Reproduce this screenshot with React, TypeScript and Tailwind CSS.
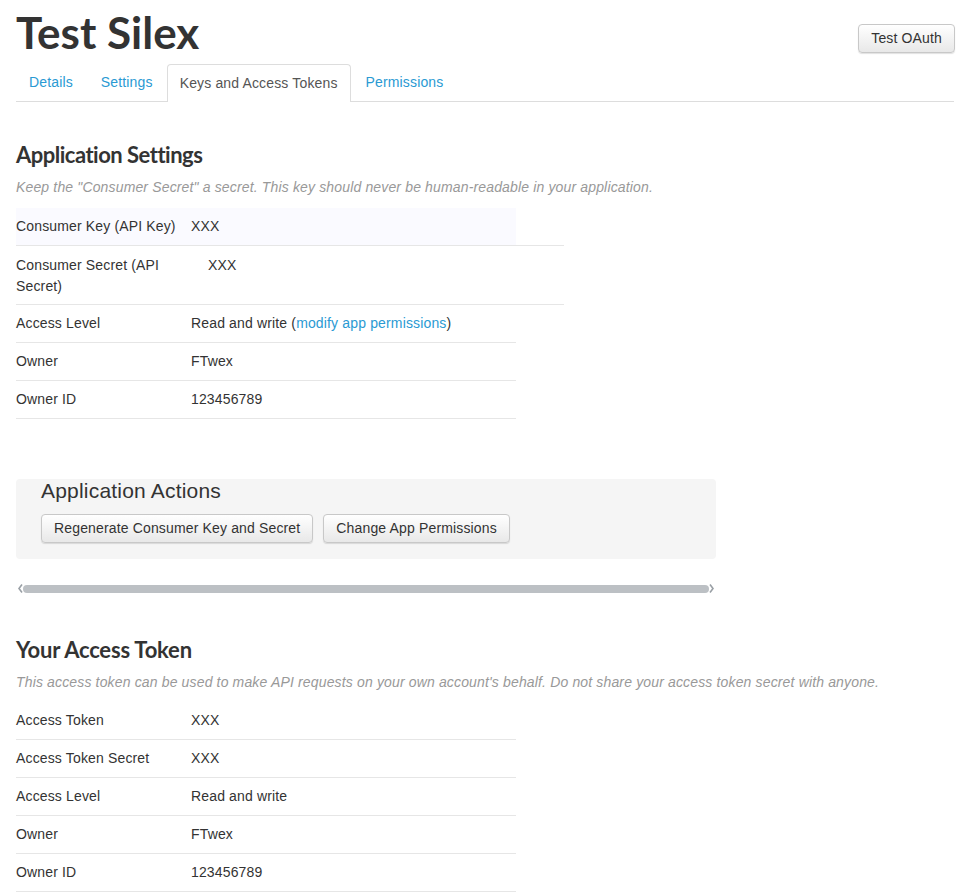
import React from "react";

const body = { fontFamily: '"Liberation Sans", Arial, sans-serif', letterSpacing: "0.15px" };
const head = { fontFamily: 'Lato, "Liberation Sans", sans-serif' };

function Row({ label, value, labelW = "w-[175px]" }: { label: React.ReactNode; value: React.ReactNode; labelW?: string }) {
  return (
    <div className="flex h-[38px] w-[500px] items-center border-b border-[#e6e6e6] text-[14px] text-[#333]">
      <div className={`${labelW} shrink-0`}>{label}</div>
      <div>{value}</div>
    </div>
  );
}

function Btn({ children }: { children: React.ReactNode }) {
  return (
    <button className="h-[29px] rounded-[4px] border border-[#c8c8c8] bg-gradient-to-b from-white to-[#e8e8e8] px-[12px] text-[14px] text-[#333] shadow-[0_1px_1px_rgba(0,0,0,0.12)]">
      {children}
    </button>
  );
}

export default function App() {
  return (
    <div className="min-h-[893px] w-[970px] bg-white px-[16px] pt-[10px] text-[#333]" style={body}>
      <div className="flex items-start justify-between">
        <h1 className="text-[44px] font-bold leading-[44px] tracking-[0px] text-[#333]" style={head}>Test Silex</h1>
        <div className="mr-[-1px] mt-[14px]">
          <Btn>Test OAuth</Btn>
        </div>
      </div>
      <div className="mt-[10px] flex h-[38px] items-stretch border-b border-[#ddd] text-[14px]">
        <a className="mr-[2px] flex items-center px-[13px] text-[#2a9ad3]">Details</a>
        <a className="mr-[1px] flex items-center px-[13px] text-[#2a9ad3]">Settings</a>
        <a className="relative mb-[-1px] mr-[2px] flex items-center rounded-t-[4px] border border-b-0 border-[#ddd] bg-white px-[12px] text-[#555]">Keys and Access Tokens</a>
        <a className="flex items-center px-[13px] text-[#2a9ad3]">Permissions</a>
      </div>

      <h2 className="mt-[40px] text-[22px] font-bold leading-[26px] tracking-[-0.5px] text-[#333]" style={head}>Application Settings</h2>
      <p className="mt-[9px] text-[14px] italic leading-[20px] text-[#999]">Keep the "Consumer Secret" a secret. This key should never be human-readable in your application.</p>

      <div className="mt-[11px] w-[548px]">
        <div className="flex h-[38px] items-center border-b border-[#e6e6e6] text-[14px]">
          <div className="flex h-full w-[500px] items-center bg-[#fafaff]">
            <div className="w-[175px] shrink-0">Consumer Key (API Key)</div>
            <div>XXX</div>
          </div>
        </div>
        <div className="flex h-[59px] items-start border-b border-[#e6e6e6] pt-[9px] text-[14px] leading-[21px]">
          <div className="w-[192px] shrink-0 pr-[30px]">Consumer Secret (API Secret)</div>
          <div>XXX</div>
        </div>
      </div>
      <Row label="Access Level" value={<span>Read and write (<a className="text-[#2a9ad3]">modify app permissions</a>)</span>} />
      <Row label="Owner" value="FTwex" />
      <Row label="Owner ID" value="123456789" />

      <div className="mt-[60px] h-[80px] w-[700px] rounded-[4px] bg-[#f5f5f5] px-[25px] pt-[0px]">
        <div className="text-[21px] leading-[24px] tracking-[0.2px] text-[#333]">Application Actions</div>
        <div className="mt-[11px] flex gap-[10px]">
          <Btn>Regenerate Consumer Key and Secret</Btn>
          <Btn>Change App Permissions</Btn>
        </div>
      </div>

      <div className="ml-[2px] mt-[25px] flex h-[9px] w-[696px] items-center">
        <svg width="5" height="9" viewBox="0 0 5 9" className="shrink-0"><path d="M4 0.5 L1 4.5 L4 8.5" stroke="#9aa0a6" strokeWidth="1.6" fill="none" /></svg>
        <div className="h-[8px] flex-1 rounded-[4px] bg-[#bcc0c4]" />
        <svg width="5" height="9" viewBox="0 0 5 9" className="shrink-0"><path d="M1 0.5 L4 4.5 L1 8.5" stroke="#9aa0a6" strokeWidth="1.6" fill="none" /></svg>
      </div>

      <h2 className="mt-[44px] text-[22px] font-bold leading-[26px] tracking-[-0.2px] text-[#333]" style={head}>Your Access Token</h2>
      <p className="mt-[9px] text-[14px] italic leading-[20px] text-[#999]">This access token can be used to make API requests on your own account's behalf. Do not share your access token secret with anyone.</p>
      <div className="mt-[10px]">
        <Row label="Access Token" value="XXX" />
        <Row label="Access Token Secret" value="XXX" />
        <Row label="Access Level" value="Read and write" />
        <Row label="Owner" value="FTwex" />
        <Row label="Owner ID" value="123456789" />
      </div>
    </div>
  );
}
